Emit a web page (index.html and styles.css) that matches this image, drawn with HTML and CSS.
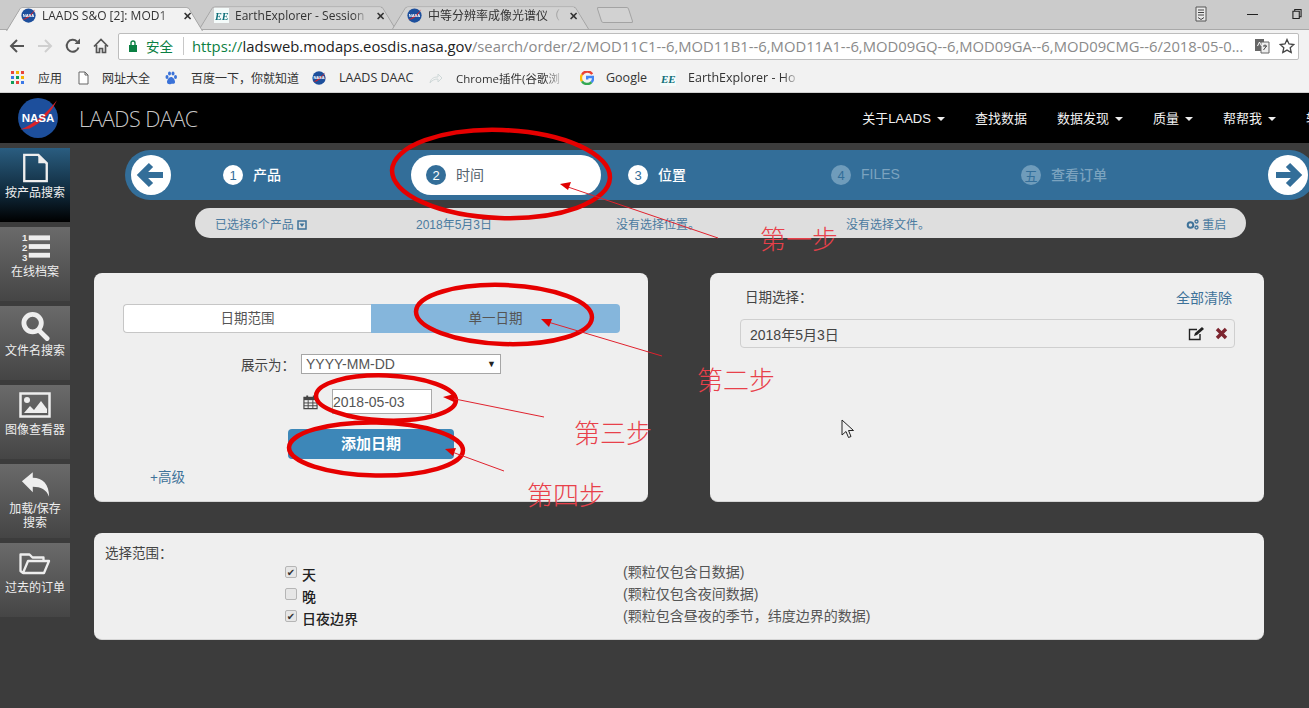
FILE: index.html
```html
<!DOCTYPE html>
<html lang="zh">
<head>
<meta charset="utf-8">
<title>LAADS DAAC</title>
<link rel="stylesheet" href="styles.css">
</head>
<body>
<svg width="0" height="0" class="defs">
  <defs>
    <g id="nasa">
      <circle cx="20" cy="20" r="19" fill="#1d4f9c"/>
      <path d="M3 31 C14 27 28 16 38 3 C33 14 24 24 12 30 Z" fill="#d8232a"/>
      <text x="20" y="24" text-anchor="middle" class="nasa-text">NASA</text>
    </g>
    <g id="ee">
      <rect width="16" height="16" fill="#f4fbfa"/>
      <text x="1" y="13" class="ee-text">EE</text>
    </g>
  </defs>
</svg>

<div class="tabs">
  <div class="tab tab-active">
    <svg class="fav" viewBox="0 0 40 40"><use href="#nasa"/></svg>
    <span class="tab-title">LAADS S&amp;O [2]: MOD1</span><span class="tab-x">✕</span>
  </div>
  <div class="tab">
    <svg class="fav" viewBox="0 0 16 16"><use href="#ee"/></svg>
    <span class="tab-title">EarthExplorer - Session</span><span class="tab-x">✕</span>
  </div>
  <div class="tab">
    <svg class="fav" viewBox="0 0 40 40"><use href="#nasa"/></svg>
    <span class="tab-title tab-cjk">中等分辨率成像光谱仪（</span><span class="tab-x">✕</span>
  </div>
  <div class="tab-new"></div>
  <div class="win">
    <svg class="win-note" viewBox="0 0 14 16"><path d="M2 1h10v14H2z" fill="#e8e8e8" stroke="#555"/><path d="M4 4h6M4 6.500h6M4 9h6M4 11.500l3 2 3-2" stroke="#444" fill="none"/></svg>
    <span class="win-min"></span>
    <svg class="win-res" viewBox="0 0 11 12"><path d="M3 3V1h7v8H8M1 3h7v8H1z" fill="none" stroke="#222" stroke-width="1.200"/></svg>
  </div>
</div>

<div class="toolbar">
  <svg class="tool" viewBox="0 0 16 16"><path d="M15 8H2M8 2 2 8l6 6" fill="none" stroke="#555" stroke-width="2"/></svg>
  <svg class="tool" viewBox="0 0 16 16"><path d="M1 8h13M8 2l6 6-6 6" fill="none" stroke="#cfcfcf" stroke-width="2"/></svg>
  <svg class="tool" viewBox="0 0 16 16"><path d="M13.500 9.500A6 6 0 1 1 12 3.500" fill="none" stroke="#555" stroke-width="2"/><path d="M9.500 6H15V.5z" fill="#555"/></svg>
  <svg class="tool" viewBox="0 0 16 16"><path d="M1 8.500 8 1.500l7 7M3.500 7v7.500h3v-4h3v4h3V7" fill="none" stroke="#555" stroke-width="1.700"/></svg>
  <div class="omni">
    <svg class="lock" viewBox="0 0 10 12"><path d="M1 5h8v7H1z" fill="#0b8043"/><path d="M3 5V3a2 2 0 0 1 4 0v2" fill="none" stroke="#0b8043" stroke-width="1.400"/></svg>
    <span class="secure">安全</span>
    <span class="omni-sep"></span>
    <span class="url"><span class="url-https">https://</span><span class="url-host">ladsweb.modaps.eosdis.nasa.gov</span>/search/order/2/MOD11C1--6,MOD11B1--6,MOD11A1--6,MOD09GQ--6,MOD09GA--6,MOD09CMG--6/2018-05-0...</span>
    <svg class="translate" viewBox="0 0 16 16"><path d="M1 1h9v12H1z" fill="#666"/><path d="M7 4h8v11H7z" fill="#eee" stroke="#666"/><path d="M9 8h4M11 6.500V8M9.500 12l3-4" stroke="#444" fill="none"/><path d="M3.500 8l2-4 2 4" stroke="#fff" fill="none"/></svg>
    <svg class="star" viewBox="0 0 16 16"><path d="M8 1.500l2 4.500 4.800.5-3.600 3.200 1 4.800L8 12.100 3.800 14.500l1-4.800L1.200 6.500 6 6z" fill="none" stroke="#444" stroke-width="1.300"/></svg>
  </div>
</div>

<div class="bookmarks">
  <svg class="apps" viewBox="0 0 13 13"><g>
    <rect width="3" height="3" fill="#e8453c"/><rect x="5" width="3" height="3" fill="#f4b400"/><rect x="10" width="3" height="3" fill="#e8453c"/>
    <rect y="5" width="3" height="3" fill="#3b78e7"/><rect x="5" y="5" width="3" height="3" fill="#0f9d58"/><rect x="10" y="5" width="3" height="3" fill="#f4b400"/>
    <rect y="10" width="3" height="3" fill="#0f9d58"/><rect x="5" y="10" width="3" height="3" fill="#e8453c"/><rect x="10" y="10" width="3" height="3" fill="#3b78e7"/></g></svg>
  <span class="bm bm-apps">应用</span>
  <svg class="bm-file" viewBox="0 0 11 14"><path d="M1 1h6l3 3v9H1zM7 1v3h3" fill="#fff" stroke="#666"/></svg>
  <span class="bm bm-url">网址大全</span>
  <svg class="bm-ico bm-paw" viewBox="0 0 14 14"><g fill="#3a72d8"><ellipse cx="3" cy="6" rx="1.500" ry="2"/><ellipse cx="5.500" cy="2.500" rx="1.500" ry="2"/><ellipse cx="9" cy="2.500" rx="1.500" ry="2"/><ellipse cx="11.500" cy="6" rx="1.500" ry="2"/><path d="M7 6c-2 0-4 3-4 5s2 2.500 4 2 4 .5 4-2-2-5-4-5z"/></g></svg>
  <span class="bm bm-baidu">百度一下，你就知道</span>
  <svg class="bm-ico bm-nasa" viewBox="0 0 40 40"><use href="#nasa"/></svg>
  <span class="bm bm-laads">LAADS DAAC</span>
  <svg class="bm-ico bm-leaf" viewBox="0 0 14 14"><path d="M1 12C2 6 7 6 9 6V3l4 4-4 4V8C6 8 3 9 1 12z" fill="none" stroke="#cfd8d8"/></svg>
  <span class="bm bm-plugin">Chrome插件(谷歌浏</span>
  <svg class="bm-g" viewBox="0 0 14 14">
    <path d="M12.200 3.100A6 6 0 0 0 2 3.700" fill="none" stroke="#ea4335" stroke-width="2.400"/>
    <path d="M2 3.700a6 6 0 0 0 0 6.600" fill="none" stroke="#fbbc05" stroke-width="2.400"/>
    <path d="M2 10.300a6 6 0 0 0 9.500.8" fill="none" stroke="#34a853" stroke-width="2.400"/>
    <path d="M11.500 11.100A6 6 0 0 0 13 6H7.200v2.500" fill="none" stroke="#4285f4" stroke-width="2.400"/>
  </svg>
  <span class="bm bm-google">Google</span>
  <svg class="bm-ico bm-ee" viewBox="0 0 16 16"><use href="#ee"/></svg>
  <span class="bm bm-earth">EarthExplorer - Ho</span>
</div>

<header class="nav">
  <svg class="logo" viewBox="0 0 40 40"><use href="#nasa"/></svg>
  <div class="brand">LAADS DAAC</div>
  <nav class="nav-items">
    <span class="nav-item">关于LAADS<i class="caret"></i></span>
    <span class="nav-item">查找数据</span>
    <span class="nav-item">数据发现<i class="caret"></i></span>
    <span class="nav-item">质量<i class="caret"></i></span>
    <span class="nav-item">帮帮我<i class="caret"></i></span>
    <span class="nav-item">轴</span>
  </nav>
</header>

<main class="main">
  <aside class="side">
    <div class="side-item side-active">
      <svg class="side-ico" viewBox="0 0 28 32"><path d="M2 2h15l9 9v19H2z" fill="none" stroke="#eee" stroke-width="2.500"/><path d="M17 1v10h10z" fill="#eee"/></svg>
      <span>按产品搜索</span>
    </div>
    <div class="side-item">
      <svg class="side-ico" viewBox="0 0 30 30"><g fill="#eee"><rect x="8" y="3" width="22" height="5"/><rect x="8" y="12" width="22" height="5"/><rect x="8" y="21" width="22" height="5"/></g><g class="side-num"><text x="1" y="9">1</text><text x="1" y="19">2</text><text x="1" y="29">3</text></g></svg>
      <span>在线档案</span>
    </div>
    <div class="side-item">
      <svg class="side-ico" viewBox="0 0 30 30"><circle cx="12" cy="12" r="9" fill="none" stroke="#eee" stroke-width="5"/><path d="M18 19l9 9" stroke="#eee" stroke-width="5" stroke-linecap="round"/></svg>
      <span>文件名搜索</span>
    </div>
    <div class="side-item">
      <svg class="side-ico side-wide" viewBox="0 0 32 26"><path d="M1.500 1.500h29v23h-29z" fill="none" stroke="#eee" stroke-width="2.500"/><circle cx="8" cy="8" r="3" fill="#eee"/><path d="M5 21l6-7 4 4 7-9 6 8v4z" fill="#eee"/></svg>
      <span>图像查看器</span>
    </div>
    <div class="side-item">
      <svg class="side-ico" viewBox="0 0 32 28"><path d="M1 11 13 1v6c11 0 18 7 18 21-3-8-9-11-18-11v6z" fill="#eee"/></svg>
      <span>加载/保存<br>搜索</span>
    </div>
    <div class="side-item">
      <svg class="side-ico side-wide" viewBox="0 0 32 24"><path d="M4 22 1.500 20V3.500h9l3 3h11V10M4 22l5-12h21l-5 12z" fill="none" stroke="#eee" stroke-width="2.300" stroke-linejoin="round"/></svg>
      <span>过去的订单</span>
    </div>
  </aside>

  <section class="content">
    <div class="wizard">
      <div class="wz-btn"><svg viewBox="0 0 30 30"><path d="M27 15H7M15 5 5 15l10 10" fill="none" stroke="#336e99" stroke-width="6"/></svg></div>
      <div class="step step-first"><b class="num">1</b><span class="step-label">产品</span></div>
      <div class="step step-current"><b class="num">2</b><span class="step-label">时间</span></div>
      <div class="step"><b class="num">3</b><span class="step-label">位置</span></div>
      <div class="step step-off step-tight"><b class="num">4</b><span class="step-label">FILES</span></div>
      <div class="step step-off"><b class="num">五</b><span class="step-label">查看订单</span></div>
      <div class="wz-btn wz-next"><svg viewBox="0 0 30 30"><path d="M3 15h20M15 5l10 10-10 10" fill="none" stroke="#336e99" stroke-width="6"/></svg></div>
    </div>

    <div class="summary">
      <span class="sum sum-a">已选择6个产品 <svg class="sum-caret" viewBox="0 0 10 10"><path d="M1 1h8v8H1z" fill="none" stroke="#3e7299" stroke-width="1.500"/><path d="M2.500 3.500h5L5 7z" fill="#3e7299"/></svg></span>
      <span class="sum sum-b">2018年5月3日</span>
      <span class="sum sum-c">没有选择位置。</span>
      <span class="sum sum-d">没有选择文件。</span>
      <span class="sum sum-e"><svg class="sum-gear" viewBox="0 0 13 11"><circle cx="4.500" cy="6" r="2.800" fill="none" stroke="#3e7299" stroke-width="2"/><circle cx="10.500" cy="2.500" r="1.500" fill="none" stroke="#3e7299" stroke-width="1.300"/><circle cx="10.500" cy="8.500" r="1.500" fill="none" stroke="#3e7299" stroke-width="1.300"/></svg> 重启</span>
    </div>

    <div class="cards">
      <div class="card card-left">
        <div class="toggle">
          <span class="toggle-opt">日期范围</span>
          <span class="toggle-opt toggle-on">单一日期</span>
        </div>
        <div class="row-format">
          <span class="format-label">展示为：</span>
          <div class="select">YYYY-MM-DD<i>▼</i></div>
        </div>
        <div class="row-date">
          <svg class="cal" viewBox="0 0 16 16"><path d="M1 3h14v12H1z" fill="none" stroke="#444" stroke-width="1.200"/><path d="M1 3h14v3H1z" fill="#444"/><path d="M1 9h14M1 12h14M5.500 6v9M10.500 6v9" stroke="#444"/><path d="M4.500 1v3M11.500 1v3" stroke="#444" stroke-width="2"/></svg>
          <input class="date" type="text" value="2018-05-03">
        </div>
        <button class="add" type="button">添加日期</button>
        <a class="adv">+高级</a>
      </div>
      <div class="card card-right">
        <div class="right-head"><span>日期选择：</span><a class="clear">全部清除</a></div>
        <div class="picked">
          <span>2018年5月3日</span>
          <svg class="edit" viewBox="0 0 17 15"><path d="M12 8v5.500H1.500v-10H9" fill="none" stroke="#222" stroke-width="1.400"/><path d="M6 10l1-3 7-6 2 2-7 6z" fill="#222"/></svg>
          <svg class="del" viewBox="0 0 13 13"><path d="M2 2l9 9M11 2l-9 9" stroke="#7d2530" stroke-width="3.400"/></svg>
        </div>
      </div>
    </div>

    <div class="card card-range">
      <div class="range-title">选择范围：</div>
      <div class="range-grid">
        <label class="opt"><span class="cb cb-on">✔</span>天</label><span class="desc desc-1">(颗粒仅包含日数据)</span>
        <label class="opt"><span class="cb"></span>晚</label><span class="desc">(颗粒仅包含夜间数据)</span>
        <label class="opt"><span class="cb cb-on">✔</span>日夜边界</label><span class="desc">(颗粒包含昼夜的季节，纬度边界的数据)</span>
      </div>
    </div>
  </section>
</main>

<svg class="marks" width="1309" height="708" viewBox="0 0 1309 708">
  <g fill="none" stroke="#e60000" stroke-width="4.500">
    <ellipse cx="501" cy="174" rx="109" ry="44" transform="rotate(2 501 174)"/>
    <ellipse cx="504" cy="314.500" rx="88" ry="29.500" transform="rotate(2 504 314)"/>
    <ellipse cx="386" cy="398" rx="70" ry="22.500" transform="rotate(2 386 398)"/>
    <ellipse cx="376" cy="449" rx="87" ry="26.500" transform="rotate(1 376 449)"/>
  </g>
  <g stroke="#e0222e" stroke-width="1">
    <path d="M718 238 565 186"/><path d="M662 356 548 322"/><path d="M544 417 450 398"/><path d="M504 471 452 452"/>
  </g>
  <g fill="#e00000">
    <path d="M560 184l11-2-3 8z"/><path d="M541 319l11 0-3 8z"/><path d="M443 397l11-3 0 8z"/><path d="M445 449l11-1-3 8z"/>
  </g>
  <path d="M842 420v15l4-3.500 2.500 6 2.500-1-2.500-6h5z" fill="#f0f0f0" stroke="#222" stroke-width="1"/>
</svg>
<span class="note note-1">第一步</span>
<span class="note note-2">第二步</span>
<span class="note note-3">第三步</span>
<span class="note note-4">第四步</span>
</body>
</html>
```

FILE: styles.css
```css
* { box-sizing: border-box; }
html, body { margin: 0; padding: 0; }
body {
  position: relative;
  width: 1309px;
  height: 708px;
  overflow: hidden;
  background: #3c3c3c;
  font-family: "Liberation Sans", "Noto Sans CJK SC", sans-serif;
  font-size: 13px;
  color: #444;
}
.defs { position: absolute; }
.nasa-text { font: 900 11px "Liberation Sans", sans-serif; fill: #fff; }
.ee-text { font: italic 700 11px "Liberation Serif", serif; fill: #0d6e78; }

/* browser tab strip */
.tabs {
  display: flex;
  height: 30px;
  padding-left: 8px;
  background: #cbcbcb;
  border-bottom: 1px solid #a9a9a9;
  font-family: "Open Sans", "Noto Sans CJK SC", sans-serif;
  font-size: 12px;
  color: #333;
}
.tab {
  position: relative;
  display: flex;
  align-items: center;
  width: 193px;
  padding: 1px 0 0 13px;
  z-index: 1;
}
.tab::before {
  content: "";
  position: absolute;
  inset: 2px -2px 0 -2px;
  background: #d2d2d2;
  border: 1px solid #a3a3a3;
  border-bottom: 0;
  border-radius: 3px 3px 0 0;
  transform: perspective(40px) rotateX(14deg);
  transform-origin: bottom;
  z-index: -1;
}
.tab-active { z-index: 2; }
.tab-active::before { background: #f2f2f2; bottom: -2px; }
.fav { flex: none; width: 15px; height: 15px; margin-right: 6px; }
.tab-title {
  width: 134px;
  white-space: nowrap;
  overflow: hidden;
  -webkit-mask-image: linear-gradient(to right, #000 88%, transparent);
  mask-image: linear-gradient(to right, #000 88%, transparent);
}
.tab-cjk { font-size: 12px; }
.tab-x { margin-left: 7px; font-size: 11px; font-weight: 700; color: #333; }
.tab-new {
  width: 32px;
  height: 16px;
  margin: 7px 0 0 12px;
  border: 1px solid #a3a3a3;
  border-radius: 2px;
  background: #d2d2d2;
  transform: skewX(18deg);
}
.win {
  display: flex;
  align-items: center;
  margin-left: auto;
  height: 28px;
  padding-right: 7px;
}
.win-note { width: 14px; height: 16px; margin-right: 39px; }
.win-min { width: 11px; height: 1px; background: #222; margin-right: 34px; }
.win-res { width: 10px; height: 12px; }

/* toolbar */
.toolbar {
  display: flex;
  align-items: center;
  height: 32px;
  padding: 0 10px 0 9px;
  background: #f2f2f2;
}
.tool { flex: none; width: 16px; height: 16px; margin-right: 12px; }
.omni {
  display: flex;
  align-items: center;
  flex: 1;
  height: 27px;
  margin-left: -3px;
  padding-left: 9px;
  background: #fff;
  border: 1px solid #bdbdbd;
  border-radius: 2px;
  font-family: "Open Sans", "Noto Sans CJK SC", sans-serif;
}
.lock { flex: none; width: 10px; height: 12px; }
.secure { margin-left: 8px; color: #0b8043; font-size: 13.500px; }
.omni-sep { width: 1px; height: 18px; margin: 0 8px 0 10px; background: #c8c8c8; }
.url {
  flex: 1;
  font-size: 14.800px;
  color: #8a8a8a;
  white-space: nowrap;
  overflow: hidden;
}
.url-https { color: #0b8043; }
.url-host { color: #222; }
.translate { flex: none; width: 16px; height: 16px; margin-left: 8px; }
.star { flex: none; width: 16px; height: 16px; margin: 0 3px 0 9px; }

/* bookmarks */
.bookmarks {
  display: flex;
  align-items: center;
  height: 31px;
  padding: 1px 0 0 11px;
  background: #f2f2f2;
  border-bottom: 1px solid #d0d0d0;
  font-family: "Open Sans", "Noto Sans CJK SC", sans-serif;
  font-size: 12px;
  color: #333;
}
.apps { flex: none; width: 13px; height: 13px; }
.bm { white-space: nowrap; overflow: hidden; }
.bm-apps { margin-left: 14px; width: 26px; }
.bm-file { flex: none; width: 11px; height: 14px; margin-left: 14px; }
.bm-url { margin-left: 13px; width: 49px; }
.bm-ico { flex: none; width: 14px; height: 14px; }
.bm-paw { margin-left: 13px; }
.bm-baidu { margin-left: 13px; width: 110px; }
.bm-nasa { margin-left: 11px; }
.bm-laads { margin-left: 13px; width: 78px; font-size: 12.500px; }
.bm-leaf { margin-left: 12px; }
.bm-plugin {
  flex: none;
  margin-left: 13px;
  width: 110px;
  font-size: 11.500px;
  -webkit-mask-image: linear-gradient(to right, #000 80%, transparent);
  mask-image: linear-gradient(to right, #000 80%, transparent);
}
.bm-g { flex: none; margin-left: 14px; width: 14px; height: 14px; }
.bm-google { margin-left: 12px; width: 44px; font-size: 12.500px; }
.bm-ee { margin-left: 10px; width: 16px; height: 16px; }
.bm-earth {
  flex: none;
  margin-left: 12px;
  width: 112px;
  font-size: 12.500px;
  -webkit-mask-image: linear-gradient(to right, #000 85%, transparent);
  mask-image: linear-gradient(to right, #000 85%, transparent);
}

/* site navigation */
.nav {
  display: flex;
  align-items: center;
  height: 50px;
  background: #000;
  color: #fff;
}
.logo { flex: none; width: 42px; height: 42px; margin-left: 17px; }
.brand {
  margin-left: 20px;
  font-family: "Open Sans", sans-serif;
  font-weight: 300;
  font-size: 21.500px;
  letter-spacing: -.5px;
  color: #c9c9c9;
}
.nav-items {
  display: flex;
  gap: 30px;
  margin-left: auto;
  margin-right: -10px;
  padding-bottom: 2px;
  font-size: 13px;
}
.nav-item { white-space: nowrap; color: #f2f2f2; }
.caret {
  display: inline-block;
  margin-left: 6px;
  vertical-align: middle;
  border: 4px solid transparent;
  border-top-color: #eee;
  border-bottom: 0;
}

/* main */
.main { display: flex; align-items: flex-start; }
.side {
  flex: none;
  display: flex;
  flex-direction: column;
  gap: 5px;
  width: 70px;
  padding-top: 5px;
}
.side-item {
  display: flex;
  flex-direction: column;
  align-items: center;
  height: 74px;
  padding-top: 5px;
  background: linear-gradient(#6a6a6a, #454545);
  color: #eee;
  font-size: 12px;
  line-height: 14px;
  text-align: center;
  white-space: nowrap;
}
.side-active { background: linear-gradient(#2a5d80 0%, #102a3c 60%, #000 100%); }
.side-ico { flex: none; width: 29px; height: 30px; margin-bottom: 3px; }
.side-wide { width: 32px; }
.side-num text { font: 700 10px "Liberation Sans", sans-serif; fill: #eee; }

.content { flex: none; width: 1239px; padding-top: 7px; }
.wizard {
  display: flex;
  align-items: center;
  width: 1190px;
  height: 50px;
  margin-left: 55px;
  padding-left: 6px;
  background: #336e99;
  border-radius: 25px;
}
.wz-btn {
  flex: none;
  display: flex;
  align-items: center;
  justify-content: center;
  width: 40px;
  height: 40px;
  margin-right: 37px;
  background: #fff;
  border-radius: 50%;
}
.wz-btn svg { width: 30px; height: 30px; }
.wz-next { margin: 0 0 0 58px; }
.step {
  flex: none;
  display: flex;
  align-items: center;
  width: 190px;
  height: 40px;
  margin-right: 13px;
  padding-left: 14px;
  border-radius: 20px;
  color: #fff;
  font-family: "Liberation Sans", "Noto Sans CJK SC", sans-serif;
  font-size: 14px;
  font-weight: 500;
}
.step-first { padding-left: 15px; }
.step-label { padding-bottom: 2px; }
.num {
  display: flex;
  align-items: center;
  justify-content: center;
  width: 20px;
  height: 20px;
  margin-right: 10px;
  background: #fff;
  color: #336e99;
  border-radius: 50%;
  font: 400 13px "Liberation Sans", "Noto Sans CJK SC", sans-serif;
}
.step-current { background: #fff; color: #55626c; font-weight: 400; padding-left: 15px; }
.step-current .num { background: #336e99; color: #fff; }
.step-off { color: #7ba3bf; }
.step-off .num { background: #6f9cbb; color: #336e99; }
.step-tight { margin-right: 0; }

.summary {
  display: flex;
  align-items: center;
  height: 30px;
  width: 1051px;
  margin: 8px 0 0 125px;
  padding-left: 20px;
  background: #dedede;
  border-radius: 15px;
  color: #4b7ba0;
  font-size: 12px;
}
.sum { flex: none; white-space: nowrap; }
.sum-a { width: 201px; }
.sum-b { width: 200px; }
.sum-c { width: 230px; }
.sum-d { width: 340px; }
.sum-caret { width: 10px; height: 10px; vertical-align: -1px; }
.sum-gear { width: 13px; height: 11px; vertical-align: -1px; }

.cards {
  display: grid;
  grid-template-columns: 554px 554px;
  gap: 62px;
  margin: 35px 0 0 24px;
}
.card {
  background: #efefef;
  border-bottom: 1px solid #d5d5d5;
  border-radius: 8px;
}
.card-left, .card-right { height: 229px; }
.card-left { padding: 31px 0 0 29px; }
.toggle {
  display: flex;
  width: 497px;
  height: 29px;
  font-size: 13.500px;
  line-height: 29px;
  text-align: center;
  color: #555;
}
.toggle-opt {
  flex: 0 0 248px;
  background: #fff;
  border: 1px solid #c6c6c6;
  border-right: 0;
  border-radius: 4px 0 0 4px;
  line-height: 27px;
}
.toggle-on {
  flex: 0 0 249px;
  background: #85b6dc;
  border: 0;
  border-radius: 0 4px 4px 0;
  line-height: 29px;
}
.row-format {
  display: flex;
  align-items: center;
  height: 20px;
  margin: 21px 0 0 118px;
}
.format-label { width: 60px; font-size: 13.500px; color: #444; white-space: nowrap; }
.select {
  position: relative;
  width: 200px;
  height: 20px;
  padding-left: 4px;
  background: #fff;
  border: 1px solid #a6a6a6;
  font-size: 14px;
  line-height: 18px;
  color: #555;
}
.select i {
  position: absolute;
  right: 4px;
  top: 0;
  font-size: 9px;
  font-style: normal;
  color: #222;
}
.row-date {
  display: flex;
  align-items: center;
  height: 25px;
  margin: 15px 0 0 180px;
}
.cal { flex: none; width: 15px; height: 16px; margin-right: 14px; }
.date {
  width: 100px;
  height: 25px;
  padding: 0;
  background: #fff;
  border: 1px solid #aaa;
  border-radius: 0;
  font: 14px "Liberation Sans", sans-serif;
  color: #555;
  outline: 0;
}
.add {
  display: block;
  width: 166px;
  height: 30px;
  margin: 15px 0 0 165px;
  padding: 0 0 4px;
  background: #3d87b8;
  border: 0;
  border-radius: 4px;
  color: #fff;
  font: 700 15px "Liberation Sans", "Noto Sans CJK SC", sans-serif;
}
.adv { display: block; margin: 10px 0 0 27px; color: #3e7299; font-size: 13.500px; line-height: 18px; }
.card-right { padding: 16px 29px 0 30px; }
.right-head {
  display: flex;
  justify-content: space-between;
  padding: 0 3px 0 5px;
  font-size: 13.500px;
  line-height: 18px;
  color: #444;
}
.clear { color: #3e7299; font-size: 14px; }
.picked {
  display: flex;
  align-items: center;
  height: 29px;
  margin-top: 12px;
  padding: 0 6px 0 9px;
  background: #efefef;
  border: 1px solid #cfcfcf;
  border-radius: 4px;
  font-size: 14px;
  color: #444;
}
.edit { width: 17px; height: 15px; margin-left: auto; }
.del { width: 13px; height: 13px; margin-left: 10px; }
.card-range {
  position: relative;
  width: 1170px;
  height: 107px;
  margin: 31px 0 0 24px;
  padding: 12px 0 0 11px;
}
.range-title { font-size: 13.500px; line-height: 18px; color: #444; }
.range-grid {
  display: grid;
  grid-template-columns: 338px auto;
  grid-auto-rows: 22px;
  margin: -3px 0 0 180px;
}
.opt { display: flex; align-items: center; padding-top: 6px; font-size: 14px; font-weight: 500; color: #222; }
.cb {
  flex: none;
  display: flex;
  align-items: center;
  justify-content: center;
  width: 12px;
  height: 12px;
  margin-right: 5px;
  margin-top: -4px;
  background: #e6e6e6;
  border: 1px solid #b5b5b5;
  border-radius: 2px;
  font: 10px "DejaVu Sans", sans-serif;
  color: #333;
}
.desc { padding-top: 3px; font-size: 14px; line-height: 18px; color: #555; white-space: nowrap; }

/* hand-drawn annotations over the screenshot */
.marks { position: absolute; left: 0; top: 0; pointer-events: none; }
.note {
  position: absolute;
  font-family: "Noto Sans CJK SC", sans-serif;
  font-weight: 300;
  font-size: 26px;
  line-height: 30px;
  color: #e8404a;
  white-space: nowrap;
}
.note-1 { left: 760px; top: 223px; }
.note-2 { left: 697px; top: 364px; }
.note-3 { left: 574px; top: 417px; }
.note-4 { left: 527px; top: 479px; }
```
